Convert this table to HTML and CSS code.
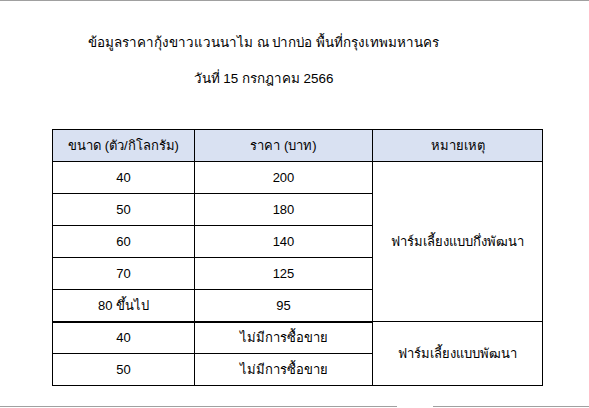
FILE: index.html
```html
<!DOCTYPE html>
<html lang="th">
<head>
<meta charset="utf-8">
<link rel="stylesheet" href="styles.css">
</head>
<body>
<div class="page">
  <div class="top-rule"></div>
  <div class="title">
    <div class="t1">ข้อมูลราคากุ้งขาวแวนนาไม ณ ปากบ่อ พื้นที่กรุงเทพมหานคร</div>
    <div class="t2">วันที่ 15 กรกฎาคม 2566</div>
  </div>
  <table class="prices">
    <colgroup>
      <col class="c1"><col class="c2"><col class="c3">
    </colgroup>
    <thead>
      <tr><th>ขนาด (ตัว/กิโลกรัม)</th><th>ราคา (บาท)</th><th>หมายเหตุ</th></tr>
    </thead>
    <tbody>
      <tr><td>40</td><td>200</td><td rowspan="5" class="note">ฟาร์มเลี้ยงแบบกึ่งพัฒนา</td></tr>
      <tr><td>50</td><td>180</td></tr>
      <tr><td>60</td><td>140</td></tr>
      <tr><td>70</td><td>125</td></tr>
      <tr class="last"><td>80 ขึ้นไป</td><td>95</td></tr>
      <tr><td>40</td><td>ไม่มีการซื้อขาย</td><td rowspan="2" class="note">ฟาร์มเลี้ยงแบบพัฒนา</td></tr>
      <tr><td>50</td><td>ไม่มีการซื้อขาย</td></tr>
    </tbody>
  </table>
  <div class="bottom-rules">
    <div class="rule left"></div>
    <div class="rule right"></div>
  </div>
</div>
</body>
</html>
```
FILE: styles.css
```css
html, body {
  margin: 0;
  padding: 0;
  background: #ffffff;
}
body {
  font-family: "Liberation Sans", "Noto Sans", sans-serif;
  color: #000;
  width: 589px;
  height: 408px;
  overflow: hidden;
}
.page {
  position: relative;
  height: 408px;
}
.top-rule {
  height: 1px;
  background: #a0a0a0;
}
.title {
  width: 527px;
  text-align: center;
  font-size: 13.4px;
  padding-top: 30px;
}
.t1 {
  height: 36px;
  line-height: 24px;
}
.t2 {
  line-height: 24px;
}
.prices {
  margin-top: 38px;
  margin-left: 52px;
  width: 491px;
  border-collapse: collapse;
  font-size: 13px;
  table-layout: fixed;
}
.c1 { width: 142px; }
.c2 { width: 178px; }
.c3 { width: 170px; }
.prices th, .prices td {
  border: 1px solid #000;
  text-align: center;
  height: 32px;
  box-sizing: border-box;
  padding: 0;
  font-weight: normal;
}
.prices th {
  background: #d9e1f2;
}
.prices tr.last td {
  border-bottom: 2px solid #000;
}
.prices td.note {
  border-bottom: 1px solid #000;
}
.bottom-rules {
  position: absolute;
  left: 0;
  right: 0;
  top: 406px;
  height: 2px;
  display: flex;
  justify-content: space-between;
}
.rule {
  height: 1px;
  background: #a0a0a0;
}
.rule.left { width: 397px; }
.rule.right { width: 156px; }
```
